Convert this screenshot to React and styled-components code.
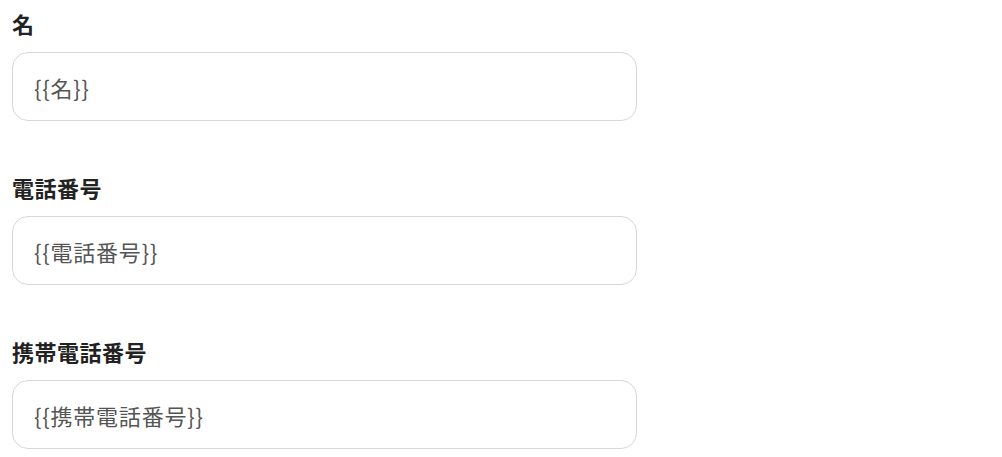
import styled, { createGlobalStyle } from 'styled-components';

const GlobalStyle = createGlobalStyle`
  body {
    margin: 0;
    background: #ffffff;
    font-family: 'Noto Sans CJK JP', 'Noto Sans', sans-serif;
  }
`;

const Form = styled.div`
  display: flex;
  flex-direction: column;
  gap: 52px;
  padding: 9px 12px;
  width: 625px;
`;

const Field = styled.div`
  display: flex;
  flex-direction: column;
  gap: 15px;
`;

const Label = styled.label`
  font-size: 22px;
  line-height: 28px;
  font-weight: 700;
  letter-spacing: 0.5px;
  color: #222222;
`;

const Box = styled.div`
  box-sizing: border-box;
  height: 69px;
  display: flex;
  align-items: center;
  padding: 0 21px;
  border: 1px solid #d3d7de;
  border-radius: 16px;
  font-size: 22px;
  letter-spacing: 0.8px;
  color: #555555;
`;

const fields = ['名', '電話番号', '携帯電話番号'];

export default function App() {
  return (
    <>
      <GlobalStyle />
      <Form>
        {fields.map((name) => (
          <Field key={name}>
            <Label>{name}</Label>
            <Box>{`{{${name}}}`}</Box>
          </Field>
        ))}
      </Form>
    </>
  );
}
